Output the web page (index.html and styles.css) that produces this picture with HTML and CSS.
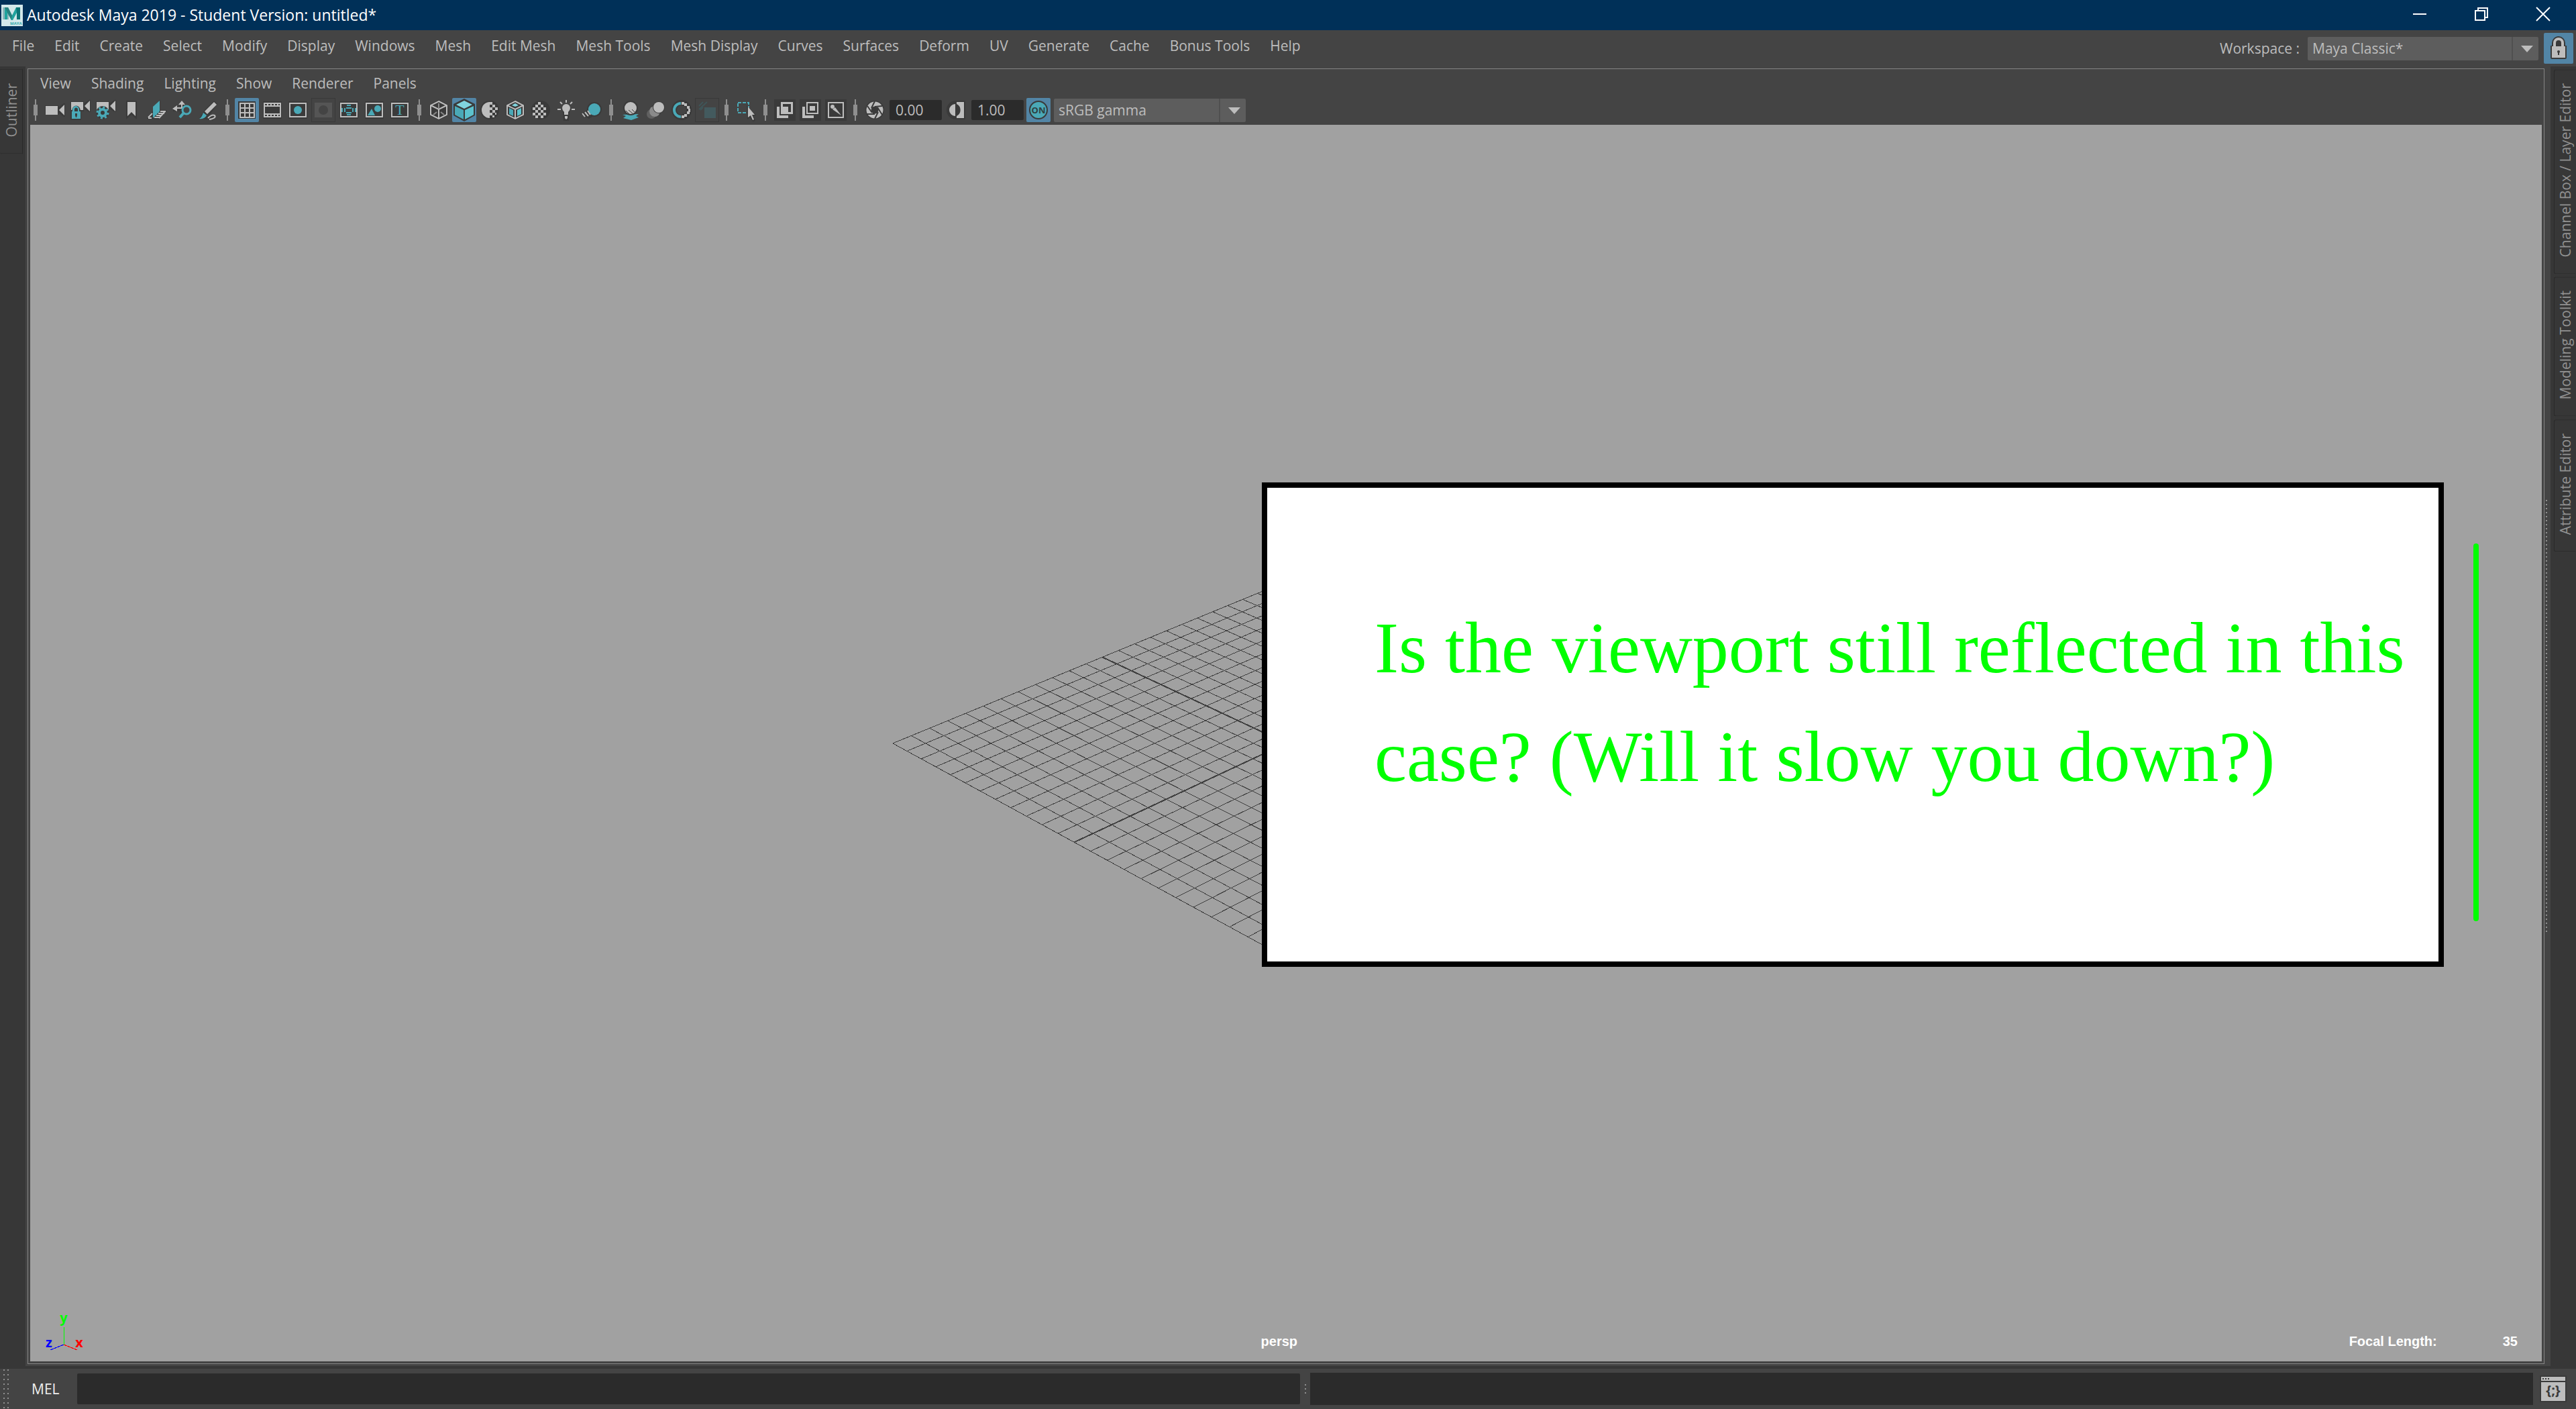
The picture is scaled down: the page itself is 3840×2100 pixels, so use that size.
FILE: index.html
```
<!DOCTYPE html>
<html lang="en">
	<head>
		<meta charset="utf-8">
		<title>Autodesk Maya 2019</title>
		<link rel="stylesheet" href="styles.css">
	</head>
	<body>
		<header class="titlebar">
			<svg class="logo" viewBox="0 0 32 32">
				<rect width="32" height="32" fill="#d3e8ea"/>
				<path d="M2 4h6l3 8v10H2z" fill="#8fb5bb"/>
				<path d="M5 4h5l6 12 6-12h6v18h-5V12l-6 11h-2L9 12v10H5z" fill="#1fa39d"/>
				<path d="M22 4h6v18h-5V12z" fill="#0c7475"/>
				<path d="M5 4h5l6 12-1 7z" fill="#28817f"/>
				<text x="13" y="30" class="logo-text">MAYA</text>
			</svg>
			<h1>Autodesk Maya 2019 - Student Version: untitled*</h1>
			<button class="winbtn" aria-label="Minimize"><svg viewBox="0 0 20 20"><path d="M0 10h20"/></svg></button>
			<button class="winbtn" aria-label="Restore"><svg viewBox="0 0 20 20"><path d="M1 5h14v14H1zM5 5V1h14v14h-4"/></svg></button>
			<button class="winbtn" aria-label="Close"><svg viewBox="0 0 20 20"><path d="M0 0l20 20M20 0L0 20"/></svg></button>
		</header>
		<div class="menubar">
			<nav class="menus">
				<button>File</button><button>Edit</button><button>Create</button><button>Select</button><button>Modify</button><button>Display</button><button>Windows</button><button>Mesh</button><button>Edit Mesh</button><button>Mesh Tools</button><button>Mesh Display</button><button>Curves</button><button>Surfaces</button><button>Deform</button><button>UV</button><button>Generate</button><button>Cache</button><button>Bonus Tools</button><button>Help</button>
			</nav>
			<label for="workspace">Workspace :</label>
			<span class="drop workspace"><select id="workspace"><option>Maya Classic*</option></select></span>
			<button class="lock" aria-label="Lock workspace">
				<svg viewBox="0 0 44 46"><path d="M10 19h2v-4a10 10 0 0 1 20 0v4h2v18a2 2 0 0 1-2 2H12a2 2 0 0 1-2-2z" fill="#3a3a3a"/><path d="M12 20h2v-5a8 8 0 0 1 16 0v5h2v17H12zM18 20h8v-5a4 4 0 0 0-8 0z" fill="#bdbdbd" fill-rule="evenodd"/><circle cx="22" cy="28" r="2" fill="#3a3a3a"/><path d="M21 28h2v5h-2z" fill="#3a3a3a"/></svg>
			</button>
		</div>
		<div class="work">
			<aside class="side left"><button class="tab">Outliner</button></aside>
			<main class="panel">
				<nav class="menus panelmenus">
					<button>View</button><button>Shading</button><button>Lighting</button><button>Show</button><button>Renderer</button><button>Panels</button>
				</nav>
				<div class="toolbar">
					<i class="sep"></i>
					<button aria-label="Select camera"><svg viewBox="0 0 36 36"><path class="k" d="M3 11h20v3l8-6h2v20h-2l-8-6v3H3z"/><path class="l" d="M4 12h18v13H4zM24 18l8-8v16z"/></svg></button>
					<button aria-label="Lock camera"><svg viewBox="0 0 36 36"><path class="k" d="M3 5h20v3l8-5h2v18h-2l-8-5v4H3z"/><path class="l" d="M4 6h18v12H4zM24 12l8-8v16z"/><path class="k" d="M3 19h2a6 7 0 0 1 13 0h1v14H3z"/><path class="t" fill-rule="evenodd" d="M5 20h1v-3a5 5 0 0 1 10 0v3h2v11H5zM9 20h5v-3a2 2 0 0 0-5 0z"/><path class="k" d="M10 23h3v3l-1 3h-1l-1-3z"/></svg></button>
					<button aria-label="Camera attributes"><svg viewBox="0 0 36 36"><path class="k" d="M3 5h20v3l8-5h2v18h-2l-8-5v4H3z"/><path class="l" d="M4 6h18v12H4zM24 12l8-8v16z"/><circle class="k" cx="13" cy="22" r="10"/><circle cx="13" cy="22" r="5" fill="none" stroke="#4aa9b7" stroke-width="4"/><circle cx="13" cy="22" r="8" fill="none" stroke="#4aa9b7" stroke-width="3" stroke-dasharray="3 3.28"/></svg></button>
					<button aria-label="Bookmarks"><svg viewBox="0 0 36 36"><path class="k" d="M10 4h16v28l-8-7-8 7z"/><path class="l" d="M12 6h12v21l-6-6-6 6z"/></svg></button>
					<button aria-label="Image plane"><svg viewBox="0 0 36 36"><path class="k" d="M3 31l9-12L23 2v16h10L21 32z"/><path class="t" d="M12 13l10-9v16L12 30z"/><path d="M5 29l6-6M5 30h5M23 20h8M20 23h9M17 26h9M14 29h8M30 20l-9 10" class="ls"/></svg></button>
					<button aria-label="2D pan zoom"><svg viewBox="0 0 36 36"><path d="M17 24V6M4 17h14" stroke="#3a3a3a" stroke-width="6"/><path class="l" d="M17 4l5 6h-4v6h-8v4l-7-4 7-5v3h6v-4h-4z"/><circle cx="24" cy="18" r="6" fill="#444" stroke="#4aa9b7" stroke-width="3"/><path d="M20 22l-6 7" stroke="#4aa9b7" stroke-width="4"/></svg></button>
					<button aria-label="Grease pencil"><svg viewBox="0 0 36 36"><path class="k" d="M5 31l8-13L27 4l5 5-12 17 10 2-4 5z"/><path class="l" d="M27 6l4 4-14 14-4-4z"/><path class="t" d="M11 22l5 4q-3 6-11 5 4-2 6-9z"/><path class="ls" d="M18 30q6-6 10-4 3 4-8 6"/></svg></button>
					<i class="sep"></i>
					<button class="on" aria-label="Grid"><svg viewBox="0 0 36 36"><path class="k" d="M5 5h26v26H5z"/><path class="ls" d="M8 8h21v21H8zM15 8v21M22 8v21M8 15h21M8 22h21"/></svg></button>
					<button aria-label="Film gate"><svg viewBox="0 0 36 36"><path class="k" d="M4 5h28v26H4z"/><path class="l" d="M5 7h26v22H5z"/><path class="k" d="M7 13h22v10H7z"/><path d="M7 10h22M7 26h22" stroke="#3a3a3a" stroke-width="2" stroke-dasharray="3 2"/></svg></button>
					<button aria-label="Resolution gate"><svg viewBox="0 0 36 36"><path class="k" d="M4 5h28v26H4z"/><path class="ls" d="M6 8h24v20H6z"/><circle class="t" cx="18" cy="18" r="6"/></svg></button>
					<button class="off" disabled aria-label="Gate mask"><svg viewBox="0 0 36 36"><path d="M5 7h26v22H5z" fill="#555"/><circle cx="18" cy="18" r="7" fill="#444"/></svg></button>
					<button aria-label="Field chart"><svg viewBox="0 0 36 36"><path class="k" d="M4 5h28v26H4z"/><path class="ls" d="M6 8h24v20H6z"/><path class="ts" d="M15 11h6M15 25h6M14 15h8M14 22h8M8 15v6M12 15v6M24 15v6M28 15v6"/></svg></button>
					<button aria-label="Safe action"><svg viewBox="0 0 36 36"><path class="k" d="M4 5h28v26H4z"/><path class="ls" d="M6 8h24v20H6z"/><path class="t" d="M8 26l6-10 5 10z"/><circle class="t" cx="23" cy="16" r="5"/></svg></button>
					<button aria-label="Safe title"><svg viewBox="0 0 36 36"><path class="k" d="M4 5h28v26H4z"/><path class="ls" d="M6 8h24v20H6z"/><text x="18" y="25" class="ticon">T</text></svg></button>
					<i class="sep"></i>
					<button aria-label="Wireframe"><svg viewBox="0 0 36 36"><path class="k" d="M18 3l14 7v16l-14 7-14-7V10z"/><path class="ls" d="M18 5l12 6v14l-12 6-12-6V11zM6 11l12 6 12-6M18 17v14"/><path d="M18 8v7M10 25l5-4M26 25l-5-4" stroke="#8a8a8a" stroke-width="2"/></svg></button>
					<button class="on" aria-label="Smooth shade"><svg viewBox="0 0 36 36"><path class="k" d="M18 1l16 8v17l-16 9-16-9V9z"/><path d="M18 4l12 6-12 6-12-6z" fill="#80d4de"/><path class="t" d="M4 12l13 6v14L4 25z"/><path d="M32 12l-13 6v14l13-7z" fill="#5cc2cd"/></svg></button>
					<button aria-label="Default material"><svg viewBox="0 0 36 36"><circle class="k" cx="18" cy="18" r="14"/><path class="l" d="M18 6a12 12 0 0 0 0 24zM18 6h4v4h-4zM22 10h4v4h-4zM18 14h4v4h-4zM26 14h4v4h-4zM22 18h4v4h-4zM18 22h4v4h-4zM26 22h2v3h-2zM22 26h3v3h-3z"/></svg></button>
					<button aria-label="Wireframe on shaded"><svg viewBox="0 0 36 36"><path class="k" d="M18 3l14 7v16l-14 7-14-7V10z"/><path class="ls" d="M18 5l12 6v14l-12 6-12-6V11zM6 11l12 6 12-6M18 17v14"/><path d="M18 8l5 3-5 2-5-2z" fill="#80d4de"/><path class="t" d="M9 15l6 3v9l-6-3z"/><path d="M21 18l6-3v9l-6 3z" fill="#5cc2cd"/></svg></button>
					<button aria-label="Textured"><svg viewBox="0 0 36 36"><circle class="k" cx="18" cy="18" r="14"/><path d="M14 8h8M10 12h16M6 16h24M10 20h16M6 24h24M10 28h16" stroke="#bdbdbd" stroke-width="4" stroke-dasharray="4 4"/></svg></button>
					<button aria-label="Use all lights"><svg viewBox="0 0 36 36"><path class="k" d="M12 12q6-5 12 0l-2 22h-8z"/><path class="l" d="M18 9a6 6 0 0 1 6 6q0 3-3 6v4h-6v-4q-3-3-3-6a6 6 0 0 1 6-6zM16 27h4v3l-2 2-2-2z"/><path class="ls" d="M18 3v4M9 6l3 3M27 6l-3 3M5 17h5M26 17h5"/></svg></button>
					<button aria-label="Shadows"><svg viewBox="0 0 36 36"><path class="k" d="M2 24l12-8 8 10-8 5z"/><circle class="k" cx="22" cy="17" r="11"/><circle class="t" cx="22" cy="17" r="9"/><path class="ls" d="M4 23l4 5M8 21l5 6M12 19l4 6"/></svg></button>
					<i class="sep"></i>
					<button aria-label="Ambient occlusion"><svg viewBox="0 0 36 36"><path class="t" d="M6 25l24-1-4 3 4 2-11 4-12-3 4-3z"/><circle class="k" cx="18" cy="15" r="11"/><circle class="l" cx="18" cy="15" r="9"/><path d="M11 19l5 5M15 18l6 5M20 17l4 4" stroke="#3a3a3a" stroke-width="1"/></svg></button>
					<button aria-label="Motion blur"><svg viewBox="0 0 36 36"><circle cx="11" cy="24" r="7" fill="#606060"/><circle class="k" cx="17" cy="19" r="9"/><circle cx="16" cy="20" r="8" fill="#8a8a8a"/><circle class="k" cx="22" cy="14" r="9"/><circle class="l" cx="22" cy="14" r="8"/></svg></button>
					<button aria-label="Anti-aliasing"><svg viewBox="0 0 36 36"><circle cx="18" cy="18" r="11" fill="none" stroke="#3a3a3a" stroke-width="8"/><path d="M17 8a10 10 0 0 0 0 20" fill="none" stroke="#4aa9b7" stroke-width="4"/><path class="l" d="M18 6h4v4h-4zM22 8h4v4h-4zM26 12h4v4h-4zM28 16h3v5h-3zM26 20h4v4h-4zM22 24h4v4h-4zM18 26h4v4h-4z"/></svg></button>
					<button class="off" disabled aria-label="Depth of field"><svg viewBox="0 0 36 36"><path d="M14 14h17v16H14z" fill="#435a5e"/><path d="M6 12l6-6M6 17l12-11M8 18l4-4" stroke="#3f5558" stroke-width="2"/></svg></button>
					<i class="sep"></i>
					<button aria-label="Isolate select"><svg viewBox="0 0 36 36"><path d="M6 7h16v15H6z" fill="none" stroke="#4aa9b7" stroke-width="2" stroke-dasharray="5 2"/><path class="k" d="M19 11l14 15-4 1 3 7-4 1-4-6-4 3z"/><path class="l" d="M21 13l10 12h-4l3 7-2 1-3-7-4 3z"/></svg></button>
					<i class="sep"></i>
					<button aria-label="X-ray"><svg viewBox="0 0 36 36"><path class="k" d="M2 2h32v32H2z"/><path class="l" fill-rule="evenodd" d="M12 6h18v18H12zM15 9v12h12V9z"/><path class="l" d="M6 13h4v13h13v4H6zM13 13h10v10H13z"/></svg></button>
					<button aria-label="X-ray active"><svg viewBox="0 0 36 36"><path class="k" d="M2 2h32v32H2z"/><path class="ls" d="M13 7h16v16H13z"/><path class="l" d="M6 13h4v13h13v4H6zM17 12h8v7h-8z"/></svg></button>
					<button aria-label="X-ray joints"><svg viewBox="0 0 36 36"><path class="k" d="M2 2h32v32H2z"/><path class="ls" d="M7 7h22v22H7z"/><circle class="l" cx="13" cy="13" r="3"/><path class="l" d="M13 17l4-3 9 12z"/></svg></button>
					<i class="sep"></i>
					<button aria-label="Exposure"><svg viewBox="0 0 36 36"><circle class="k" cx="18" cy="18" r="14"/><circle cx="18" cy="18" r="9" fill="none" stroke="#bdbdbd" stroke-width="7"/><path d="M18 5l-5 10M29 12l-11 1M29 25l-7-11M18 31l5-10M6 24l12 0M7 12l7 10" stroke="#3a3a3a" stroke-width="2"/></svg></button>
					<input class="num" value="0.00" aria-label="Exposure value">
					<button aria-label="Contrast"><svg viewBox="0 0 36 36"><path class="k" d="M17 4h14v28H17a14 14 0 0 1 0-28z"/><path class="l" d="M16 9v18a9 9 0 0 1 0-18zM18 6h11v24H18v-3a10 10 0 0 0 0-18z"/></svg></button>
					<input class="num" value="1.00" aria-label="Gamma value">
					<button class="on" aria-label="View transform"><svg viewBox="0 0 36 36"><circle cx="18" cy="18" r="13" fill="#4aa9b7" stroke="#3a3a3a" stroke-width="2"/><text x="18" y="23" class="onicon">ON</text></svg></button>
					<span class="drop gamma"><select aria-label="View transform name"><option>sRGB gamma</option></select></span>
				</div>
				<div class="viewport">
					<svg class="floor"><path id="grid"/><path id="axes"/></svg>
					<svg class="gizmo" viewBox="0 0 70 90">
						<path d="M35 70V44" stroke="#0f0"/><path d="M35 70l20 8" stroke="#f00"/><path d="M35 70l-20 8" stroke="#00f"/>
						<text x="35" y="37" fill="#0f0">y</text><text x="58" y="74" fill="#f00">x</text><text x="13" y="74" fill="#00f">z</text>
					</svg>
					<span class="hud camera">persp</span>
					<div class="hud focal"><span>Focal Length:</span><span>35</span></div>
					<p class="note">Is the viewport still reflected in this case? (Will it slow you down?)</p>
					<i class="bar"></i>
				</div>
			</main>
			<i class="splitter"></i>
			<aside class="side right"><button class="tab">Channel Box / Layer Editor</button><button class="tab">Modeling Toolkit</button><button class="tab">Attribute Editor</button></aside>
		</div>
		<footer class="command">
			<i class="grip"></i>
			<label for="mel">MEL</label>
			<input id="mel">
			<i class="handle"></i>
			<output></output>
			<button aria-label="Script editor">
				<svg viewBox="0 0 40 40"><path d="M0 0h40v40H0z" fill="#3a3a3a"/><path class="l" d="M2 2h36v6H2zM2 10h36v28H2z"/><path class="k" d="M4 4h2v2H4zM8 4h2v2H8zM12 4h2v2h-2z"/><text x="20" y="29" class="braces">{;}</text></svg>
			</button>
		</footer>
<script>
// floor grid: 24x24 cells in perspective, u goes up-right and v goes down-right
const pt=(u,v,w=1+.0057025*u-.0058938*v)=>
	(1285.8+(27.8147*u+20.9475*v)/w).toFixed(1)+" "+(921.9+(11.415*v-11.438*u)/w).toFixed(1);
let g="";
for(let i=0;i<=24;i++) if(i!=12) g+=`M${pt(i,0)}L${pt(i,24)}M${pt(0,i)}L${pt(24,i)}`;
document.getElementById("grid").setAttribute("d",g);
document.getElementById("axes").setAttribute("d",`M${pt(12,0)}L${pt(12,24)}M${pt(0,12)}L${pt(24,12)}`);
</script>
	</body>
</html>
```
FILE: styles.css
```
* { box-sizing: border-box }
body {
	margin: 0;
	height: 100vh;
	display: flex;
	flex-direction: column;
	overflow: hidden;
	background: #444;
	color: #bdbdbd;
	font-family: "Open Sans", "Noto Sans", sans-serif;
	font-size: 21px;
}
button, input, select {
	margin: 0;
	padding: 0;
	border: none;
	background: none;
	color: inherit;
	font: inherit;
}
svg { display: block }
.titlebar {
	display: flex;
	align-items: center;
	height: 45px;
	padding: 0 3px 0 2px;
	background: #003058;
	color: #fff;
}
.logo { width: 32px; height: 32px }
.logo-text { font-size: 6px; font-weight: bold; fill: #3aa }
h1 {
	flex: 1;
	margin: 0 0 0 6px;
	font-size: 23px;
	font-weight: normal;
	line-height: 45px;
}
.winbtn {
	width: 92px;
	height: 42px;
	align-self: flex-start;
}
.winbtn svg {
	width: 20px;
	height: 20px;
	margin: auto;
	overflow: visible;
	fill: none;
	stroke: #fff;
	stroke-width: 2;
}
.menubar {
	display: flex;
	align-items: center;
	height: 54px;
	padding-right: 4px;
}
.menus {
	display: flex;
	gap: 30px;
	padding-left: 18px;
	line-height: 30px;
}
.menubar .menus { flex: 1; padding-bottom: 8px }
.menus button { white-space: nowrap }
.drop {
	position: relative;
	display: block;
	height: 35px;
	border-radius: 2px;
	background: #5d5d5d;
}
.drop select {
	width: 100%;
	height: 100%;
	padding-left: 7px;
	appearance: none;
}
.drop::before {
	content: "";
	position: absolute;
	right: 38px;
	height: 100%;
	border-left: 2px solid #505050;
}
.drop::after {
	content: "";
	position: absolute;
	right: 8px;
	top: 13px;
	border: 9px solid transparent;
	border-top: 10px solid #bdbdbd;
	border-bottom: none;
	pointer-events: none;
}
.workspace { width: 344px; margin: 0 8px 0 12px }
.lock {
	width: 44px;
	height: 46px;
	border-radius: 2px;
	background: #5285a6;
}
.work {
	flex: 1;
	display: flex;
	min-height: 0;
	border-bottom: 4px solid #373737;
}
.side {
	display: flex;
	flex-direction: column;
	gap: 4px;
	width: 38px;
	padding-top: 4px;
	background: #373737;
	color: #919191;
}
.left { padding-right: 4px; margin-right: 3px }
.right { padding-left: 5px }
.tab {
	padding: 24px 0 20px;
	border: 1px solid #2a2a2a;
	border-radius: 0 3px 3px 0;
	line-height: 30px;
	writing-mode: vertical-rl;
	transform: rotate(180deg);
}
.left .tab { border-right: 0 }
.right .tab { border-left: 1px solid #373737 }
.panel {
	flex: 1;
	display: flex;
	flex-direction: column;
	min-width: 0;
	margin: 3px 0;
	border: 1px solid #858585;
}
.panelmenus { height: 43px; padding-bottom: 2px }
.toolbar {
	display: flex;
	align-items: center;
	gap: 2px;
	height: 40px;
	padding: 0 0 4px 2px;
}
.toolbar button { width: 36px; height: 36px }
.on { border-radius: 2px; background: #5285a6 }
.off { outline: 1px solid #393939; outline-offset: -1px }
.sep {
	width: 18px;
	height: 32px;
	background: linear-gradient(#8f8f8f, #8f8f8f) center / 2px 32px no-repeat, linear-gradient(#8f8f8f, #8f8f8f) center / 6px 16px no-repeat;
}
.k { fill: #3a3a3a }
.l { fill: #bdbdbd }
.t { fill: #4aa9b7 }
.ls { fill: none; stroke: #bdbdbd; stroke-width: 2 }
.ts { fill: none; stroke: #4aa9b7; stroke-width: 2 }
.ticon {
	font: 22px "Liberation Serif", serif;
	text-anchor: middle;
	fill: #4aa9b7;
}
.onicon {
	font-size: 13px;
	font-weight: bold;
	text-anchor: middle;
	fill: #2f3f42;
}
.num {
	width: 78px;
	height: 30px;
	margin: 0 2px;
	padding-left: 9px;
	border-radius: 2px;
	background: #2b2b2b;
}
.gamma { width: 286px; margin-left: 3px }
.viewport {
	position: relative;
	flex: 1;
	margin: 0 3px 3px;
	overflow: hidden;
	background: #a1a1a1;
}
.floor {
	width: 100%;
	height: 100%;
	fill: none;
	stroke: #404040;
	shape-rendering: crispEdges;
}
#axes { stroke-width: 2 }
.gizmo {
	position: absolute;
	left: 15px;
	bottom: 5px;
	width: 70px;
	height: 90px;
	font-size: 20px;
	font-weight: bold;
	text-anchor: middle;
	shape-rendering: crispEdges;
}
.hud {
	position: absolute;
	bottom: 18px;
	color: #fff;
	font: bold 20px/24px "Liberation Sans", sans-serif;
}
.camera { left: 49% }
.focal {
	right: 36px;
	display: flex;
	gap: 98px;
}
.note {
	position: absolute;
	top: 533px;
	left: 1836px;
	right: 146px;
	height: 722px;
	margin: 0;
	padding: 158px 24px 0 160px;
	border: 8px solid #000;
	background: #fff;
	color: #0f0;
	font: 108px/162px "Liberation Serif", serif;
}
.bar {
	position: absolute;
	top: 624px;
	right: 94px;
	width: 8px;
	height: 563px;
	border-radius: 4px;
	background: #0f0;
}
.splitter {
	width: 9px;
	background: repeating-linear-gradient(#8f8f8f 0 2px, transparent 2px 6px) 2px center / 2px 646px no-repeat;
}
.command {
	display: flex;
	align-items: center;
	height: 60px;
	padding-right: 14px;
	color: #eee;
}
.grip {
	width: 8px;
	height: 60px;
	margin: 0 34px 0 5px;
	background: repeating-linear-gradient(#444 0 1px, transparent 1px 3px, #444 3px 7px), linear-gradient(90deg, #8f8f8f 2px, transparent 2px 6px, #8f8f8f 6px);
}
.command label { width: 68px }
.command input {
	flex: 1;
	min-width: 0;
	height: 46px;
	text-indent: 8px;
	border-radius: 2px;
	background: #2b2b2b;
}
.handle {
	width: 2px;
	height: 14px;
	margin: 0 6px 0 7px;
	background: repeating-linear-gradient(#8f8f8f 0 2px, transparent 2px 6px);
}
.command output {
	flex: 1;
	height: 48px;
	margin-right: 10px;
	background: #2b2b2b;
}
.command button { width: 40px; height: 40px }
.braces {
	font-size: 20px;
	font-weight: bold;
	text-anchor: middle;
	fill: #3a3a3a;
}
```
